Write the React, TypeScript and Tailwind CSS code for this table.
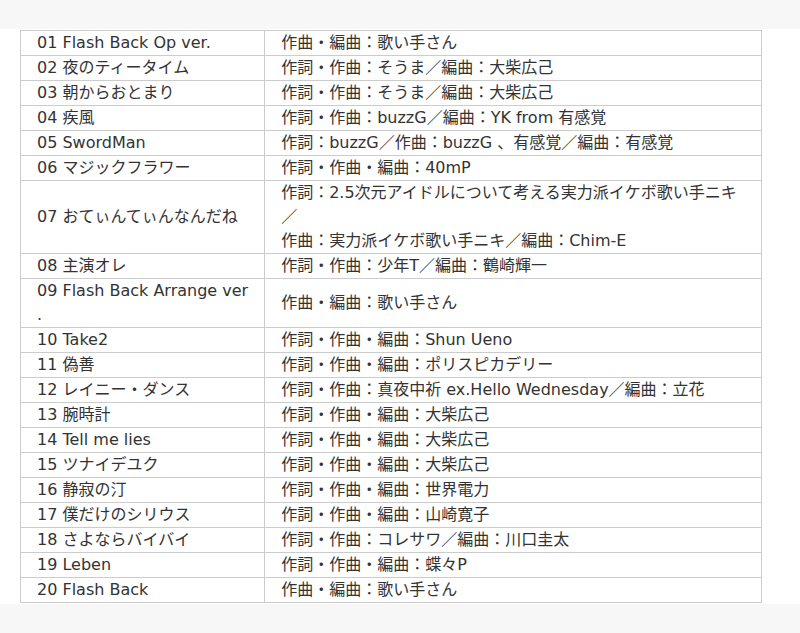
const tracks: { title: string | string[]; credit: string | string[] }[] = [
  { title: '01 Flash Back Op ver.', credit: '作曲・編曲：歌い手さん' },
  { title: '02 夜のティータイム', credit: '作詞・作曲：そうま／編曲：大柴広己' },
  { title: '03 朝からおとまり', credit: '作詞・作曲：そうま／編曲：大柴広己' },
  { title: '04 疾風', credit: '作詞・作曲：buzzG／編曲：YK from 有感覚' },
  { title: '05 SwordMan', credit: '作詞：buzzG／作曲：buzzG 、有感覚／編曲：有感覚' },
  { title: '06 マジックフラワー', credit: '作詞・作曲・編曲：40mP' },
  {
    title: '07 おてぃんてぃんなんだね',
    credit: ['作詞：2.5次元アイドルについて考える実力派イケボ歌い手ニキ', '／', '作曲：実力派イケボ歌い手ニキ／編曲：Chim-E'],
  },
  { title: '08 主演オレ', credit: '作詞・作曲：少年T／編曲：鶴崎輝一' },
  // the dot wraps on its own in the original
  { title: ['09 Flash Back Arrange ver', '.'], credit: '作曲・編曲：歌い手さん' },
  { title: '10 Take2', credit: '作詞・作曲・編曲：Shun Ueno' },
  { title: '11 偽善', credit: '作詞・作曲・編曲：ポリスピカデリー' },
  { title: '12 レイニー・ダンス', credit: '作詞・作曲：真夜中祈 ex.Hello Wednesday／編曲：立花' },
  { title: '13 腕時計', credit: '作詞・作曲・編曲：大柴広己' },
  { title: '14 Tell me lies', credit: '作詞・作曲・編曲：大柴広己' },
  { title: '15 ツナイデユク', credit: '作詞・作曲・編曲：大柴広己' },
  { title: '16 静寂の汀', credit: '作詞・作曲・編曲：世界電力' },
  { title: '17 僕だけのシリウス', credit: '作詞・作曲・編曲：山崎寛子' },
  { title: '18 さよならバイバイ', credit: '作詞・作曲：コレサワ／編曲：川口圭太' },
  { title: '19 Leben', credit: '作詞・作曲・編曲：蝶々P' },
  { title: '20 Flash Back', credit: '作曲・編曲：歌い手さん' },
]

function Lines({ value }: { value: string | string[] }) {
  if (!Array.isArray(value)) return <>{value}</>
  return (
    <>
      {value.map((line, i) => (
        <div key={i}>{line}</div>
      ))}
    </>
  )
}

export default function App() {
  return (
    <div className="min-h-[633px] bg-[#f7f7f7] pt-[29px] font-['DejaVu_Sans','Noto_Sans_CJK_JP',sans-serif] text-[16px] leading-[24px] text-[#333]">
      <div className="bg-white py-px pl-5">
        <table className="w-[742px] border-collapse border border-[#ccc]">
          <colgroup>
            <col className="w-[244px]" />
            <col />
          </colgroup>
          <tbody>
            {tracks.map((t, i) => (
              <tr key={i}>
                <td className="border border-[#ccc] px-4 py-0 align-middle whitespace-nowrap">
                  <Lines value={t.title} />
                </td>
                <td className="border border-[#ccc] px-4 py-0 align-middle">
                  <Lines value={t.credit} />
                </td>
              </tr>
            ))}
          </tbody>
        </table>
      </div>
    </div>
  )
}
